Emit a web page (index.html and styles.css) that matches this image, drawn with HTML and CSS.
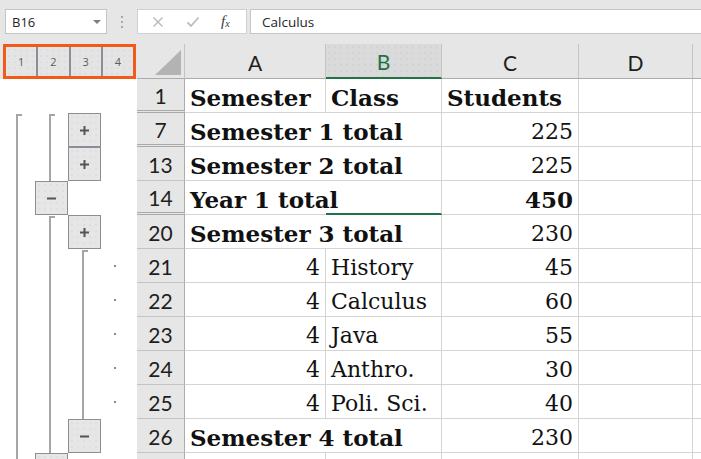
FILE: index.html
```html
<!DOCTYPE html>
<html>
<head>
<meta charset="utf-8">
<link rel="stylesheet" href="styles.css">
</head>
<body>
<div class="toolbar">
  <div class="namebox"><span>B16</span><span class="caret"></span></div>
  <div class="grip"><i></i><i></i><i></i></div>
  <div class="fxbox">
    <svg class="ico" width="12" height="12" viewBox="0 0 12 12"><path d="M1.5 1.5 L10.5 10.5 M10.5 1.5 L1.5 10.5" stroke="#b9b9b9" stroke-width="1.4" fill="none"/></svg>
    <svg class="ico" width="14" height="12" viewBox="0 0 14 12"><path d="M1.5 6.5 L5 10 L12.5 1.5" stroke="#bdbdbd" stroke-width="1.8" fill="none"/></svg>
    <span class="fx">f<sub>x</sub></span>
  </div>
  <div class="formula">Calculus</div>
</div>

<div class="sheet">
  <div class="row hrow">
    <div class="olhead">
      <div class="levels"><div class="lv">1</div><div class="lv">2</div><div class="lv">3</div><div class="lv">4</div></div>
    </div>
    <div class="corner"><svg width="47" height="34" viewBox="0 0 47 34"><polygon points="18,31 44,31 44,6" fill="#b3b3b3"/></svg></div>
    <div class="ch">A</div>
    <div class="ch sel">B</div>
    <div class="ch">C</div>
    <div class="ch">D</div>
    <div class="ch last"></div>
  </div>

  <div class="row">
    <div class="ol"><div class="s"></div><div class="s"></div><div class="s"></div><div class="s"></div></div>
    <div class="rh dbl">1</div>
    <div class="d b">Semester</div>
    <div class="d b">Class</div>
    <div class="d b">Students</div>
    <div class="d"></div>
    <div class="d"></div>
  </div>

  <div class="row">
    <div class="ol"><div class="s l st"></div><div class="s l st"></div><div class="s"><div class="ob"><svg width="9" height="9" viewBox="0 0 9 9"><path d="M0 4.5 H9 M4.5 0 V9" stroke="#555" stroke-width="2"/></svg></div></div><div class="s"></div></div>
    <div class="rh dbl">7</div>
    <div class="d b ov">Semester 1 total</div>
    <div class="d"></div>
    <div class="d r">225</div>
    <div class="d"></div>
    <div class="d"></div>
  </div>

  <div class="row">
    <div class="ol"><div class="s l"></div><div class="s l"></div><div class="s"><div class="ob"><svg width="9" height="9" viewBox="0 0 9 9"><path d="M0 4.5 H9 M4.5 0 V9" stroke="#555" stroke-width="2"/></svg></div></div><div class="s"></div></div>
    <div class="rh">13</div>
    <div class="d b ov">Semester 2 total</div>
    <div class="d"></div>
    <div class="d r">225</div>
    <div class="d"></div>
    <div class="d"></div>
  </div>

  <div class="row">
    <div class="ol"><div class="s l"></div><div class="s"><div class="ob"><svg width="9" height="9" viewBox="0 0 9 9"><path d="M0 4.5 H9" stroke="#555" stroke-width="2"/></svg></div></div><div class="s"></div><div class="s"></div></div>
    <div class="rh dbl">14</div>
    <div class="d b ov">Year 1 total</div>
    <div class="d selb"></div>
    <div class="d r b">450</div>
    <div class="d"></div>
    <div class="d"></div>
  </div>

  <div class="row">
    <div class="ol"><div class="s l"></div><div class="s l st"></div><div class="s"><div class="ob"><svg width="9" height="9" viewBox="0 0 9 9"><path d="M0 4.5 H9 M4.5 0 V9" stroke="#555" stroke-width="2"/></svg></div></div><div class="s"></div></div>
    <div class="rh">20</div>
    <div class="d b ov">Semester 3 total</div>
    <div class="d"></div>
    <div class="d r">230</div>
    <div class="d"></div>
    <div class="d"></div>
  </div>

  <div class="row">
    <div class="ol"><div class="s l"></div><div class="s l"></div><div class="s l st"></div><div class="s dot"></div></div>
    <div class="rh">21</div>
    <div class="d r">4</div>
    <div class="d">History</div>
    <div class="d r">45</div>
    <div class="d"></div>
    <div class="d"></div>
  </div>

  <div class="row">
    <div class="ol"><div class="s l"></div><div class="s l"></div><div class="s l"></div><div class="s dot"></div></div>
    <div class="rh">22</div>
    <div class="d r">4</div>
    <div class="d">Calculus</div>
    <div class="d r">60</div>
    <div class="d"></div>
    <div class="d"></div>
  </div>

  <div class="row">
    <div class="ol"><div class="s l"></div><div class="s l"></div><div class="s l"></div><div class="s dot"></div></div>
    <div class="rh">23</div>
    <div class="d r">4</div>
    <div class="d">Java</div>
    <div class="d r">55</div>
    <div class="d"></div>
    <div class="d"></div>
  </div>

  <div class="row">
    <div class="ol"><div class="s l"></div><div class="s l"></div><div class="s l"></div><div class="s dot"></div></div>
    <div class="rh">24</div>
    <div class="d r">4</div>
    <div class="d">Anthro.</div>
    <div class="d r">30</div>
    <div class="d"></div>
    <div class="d"></div>
  </div>

  <div class="row">
    <div class="ol"><div class="s l"></div><div class="s l"></div><div class="s l"></div><div class="s dot"></div></div>
    <div class="rh">25</div>
    <div class="d r">4</div>
    <div class="d">Poli. Sci.</div>
    <div class="d r">40</div>
    <div class="d"></div>
    <div class="d"></div>
  </div>

  <div class="row">
    <div class="ol"><div class="s l"></div><div class="s l"></div><div class="s"><div class="ob"><svg width="9" height="9" viewBox="0 0 9 9"><path d="M0 4.5 H9" stroke="#555" stroke-width="2"/></svg></div></div><div class="s"></div></div>
    <div class="rh">26</div>
    <div class="d b ov">Semester 4 total</div>
    <div class="d"></div>
    <div class="d r">230</div>
    <div class="d"></div>
    <div class="d"></div>
  </div>

  <div class="row short">
    <div class="ol"><div class="s l"></div><div class="s"><div class="ob"></div></div><div class="s"></div><div class="s"></div></div>
    <div class="rh"></div>
    <div class="d"></div>
    <div class="d"></div>
    <div class="d"></div>
    <div class="d"></div>
    <div class="d"></div>
  </div>
</div>
</body>
</html>
```

FILE: styles.css
```css
html, body {
  margin: 0;
  padding: 0;
}
body {
  width: 701px;
  height: 459px;
  overflow: hidden;
  background: #ffffff;
  font-family: "Open Sans", "Liberation Sans", sans-serif;
  color: #222;
}

/* ---------- toolbar ---------- */
.toolbar {
  height: 44px;
  box-sizing: border-box;
  background: #e6e6e6;
  display: flex;
  align-items: flex-start;
  padding-top: 9px;
}
.namebox {
  margin-left: 5px;
  width: 102px;
  height: 25px;
  box-sizing: border-box;
  border: 1px solid #c6c6c6;
  background: #fff;
  display: flex;
  align-items: center;
  justify-content: space-between;
  padding: 0 5px 0 6px;
  font-size: 13px;
  color: #262626;
}
.caret {
  width: 0;
  height: 0;
  border-left: 4px solid transparent;
  border-right: 4px solid transparent;
  border-top: 4px solid #808080;
}
.grip {
  margin-left: 14px;
  width: 2px;
  height: 25px;
  display: flex;
  flex-direction: column;
  justify-content: center;
  gap: 3px;
}
.grip i {
  display: block;
  width: 2px;
  height: 2px;
  background: #a9a9a9;
}
.fxbox {
  margin-left: 14px;
  width: 110px;
  height: 25px;
  box-sizing: border-box;
  border: 1px solid #d0d0d0;
  background: #fff;
  display: flex;
  align-items: center;
  padding-left: 14px;
}
.ico { flex: none; }
.ico + .ico { margin-left: 22px; }
.fx {
  margin-left: 21px;
  font-family: "Liberation Serif", serif;
  font-style: italic;
  font-size: 15px;
  color: #3a3a3a;
  line-height: 1;
}
.fx sub {
  font-size: 10px;
  vertical-align: -1px;
}
.formula {
  margin-left: 3px;
  flex: 1;
  height: 25px;
  box-sizing: border-box;
  border: 1px solid #c6c6c6;
  border-right: none;
  background: #fff;
  display: flex;
  align-items: center;
  padding-left: 11px;
  font-size: 13.5px;
  color: #262626;
}

/* ---------- sheet ---------- */
.row {
  display: grid;
  grid-template-columns: 137px 48px 141px 116px 137px 114px 1fr;
  height: 34px;
}
.row.short {
  height: 6px;
  overflow: hidden;
}
.hrow {
  height: 35px;
  background: #e6e6e6;
}
.olhead {
  display: flex;
}
.levels {
  margin-left: 3px;
  width: 133px;
  height: 35px;
  box-sizing: border-box;
  border: 3px solid #f2591a;
  display: flex;
}
.lv {
  flex: 1;
  display: flex;
  align-items: center;
  justify-content: center;
  font-size: 11px;
  color: #5a5a5a;
  background-color: #e4e4e4;
  background-image: radial-gradient(#d6d6d6 0.6px, transparent 0.8px);
  background-size: 6px 6px;
}
.lv + .lv {
  border-left: 2px solid #8d8d95;
}
.corner {
  box-sizing: border-box;
  border-right: 1px solid #c4c4c4;
  border-bottom: 1px solid #ababab;
  display: flex;
}
.ch {
  box-sizing: border-box;
  border-right: 1px solid #c4c4c4;
  border-bottom: 1px solid #ababab;
  display: flex;
  align-items: center;
  justify-content: center;
  font-family: Lato, "Open Sans", sans-serif;
  font-size: 21px;
  color: #1e1e1e;
  padding-top: 2px;
}
.ch.sel {
  color: #217346;
  background-color: #dadada;
  background-image: radial-gradient(#cbcbcb 0.6px, transparent 0.8px);
  background-size: 6px 6px;
  border-bottom: 2px solid #217346;
}
.ch.last { border-right: none; }

/* outline column */
.ol {
  display: flex;
  background: #fff;
}
.s {
  flex: none;
  width: 33px;
  height: 100%;
}
.s.l {
  background: linear-gradient(#a6a6a6, #a6a6a6) 16px 0 / 2px 100% no-repeat;
}
.s.l.st {
  background:
    linear-gradient(#a6a6a6, #a6a6a6) 16px 1px / 6px 2px no-repeat,
    linear-gradient(#a6a6a6, #a6a6a6) 16px 1px / 2px 100% no-repeat;
}
.s.dot {
  background: linear-gradient(#8a8a8a, #8a8a8a) 15px 16px / 2px 2px no-repeat;
}
.ob {
  margin-left: 2px;
  width: 33px;
  height: 34px;
  box-sizing: border-box;
  border: 1px solid #8d8d95;
  background-color: #e6e6e6;
  background-image: radial-gradient(#d4d4d4 0.6px, transparent 0.8px);
  background-size: 6px 6px;
  display: flex;
  align-items: center;
  justify-content: center;
}

/* row headers */
.rh {
  box-sizing: border-box;
  background: #e6e6e6;
  border-right: 1px solid #ababab;
  border-bottom: 1px solid #c4c4c4;
  display: flex;
  align-items: center;
  justify-content: center;
  font-family: Lato, "Open Sans", sans-serif;
  font-size: 21px;
  color: #1e1e1e;
  padding-top: 2px;
}
.rh.dbl {
  border-bottom: 3px double #a9a9a9;
}

/* data cells */
.d {
  box-sizing: border-box;
  border-right: 1px solid #d4d4d4;
  border-bottom: 1px solid #d4d4d4;
  display: flex;
  align-items: flex-end;
  padding: 0 5px 3px 5px;
  font-family: "DejaVu Serif", "Liberation Serif", serif;
  font-size: 22px;
  line-height: 1;
  white-space: nowrap;
  color: #111;
}
.d.b { font-size: 23px; font-weight: bold; }
.d.r { justify-content: flex-end; }
.d.ov { border-right: none; }
.d.selb { border-bottom: 2px solid #217346; }
```
